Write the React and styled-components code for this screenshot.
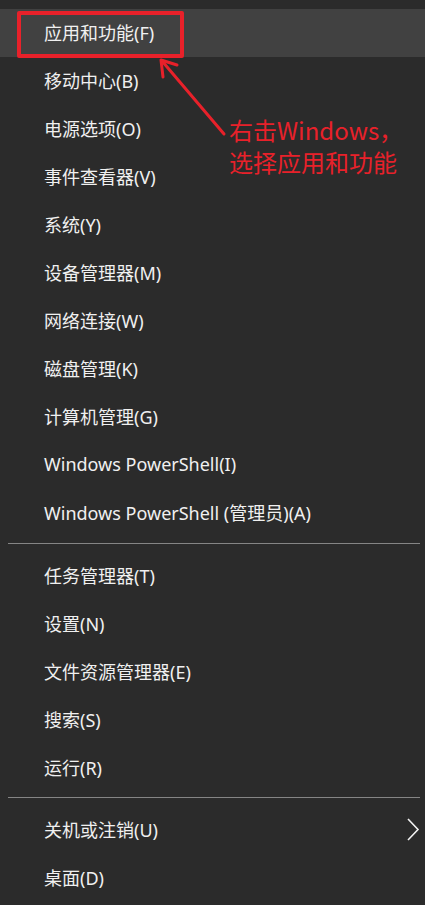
import styled, { createGlobalStyle } from "styled-components";

const GlobalStyle = createGlobalStyle`
  html, body {
    margin: 0;
    padding: 0;
    background: #2b2b2b;
  }
  body {
    font-family: "Noto Sans", "Noto Sans CJK SC", sans-serif;
  }
`;

const Page = styled.div`
  position: relative;
  width: 425px;
  height: 905px;
  background: #2b2b2b;
  overflow: hidden;
`;

const Menu = styled.div`
  display: flex;
  flex-direction: column;
  padding-top: 9px;
`;

const Item = styled.div`
  position: relative;
  display: flex;
  align-items: center;
  box-sizing: border-box;
  height: 48px;
  padding: 0 0 2px 44px;
  font-family: "Noto Sans", "Noto Sans CJK SC", sans-serif;
  font-size: 18px;
  color: #f0f0f0;
  background: ${(p) => (p.$active ? "#414141" : "transparent")};
`;

const Separator = styled.div`
  height: 1px;
  background: #858585;
  margin: ${(p) => p.$margin};
`;

const Chevron = styled.svg`
  position: absolute;
  right: 5px;
  top: 12px;
`;

const HighlightBox = styled.div`
  position: absolute;
  left: 17px;
  top: 11px;
  width: 159px;
  height: 39px;
  border: 4px solid #e8212a;
  border-radius: 2px;
`;

const Arrow = styled.svg`
  position: absolute;
  left: 150px;
  top: 50px;
`;

const Note = styled.div`
  position: absolute;
  left: 229px;
  top: 114px;
  font-family: "Noto Sans CJK SC", sans-serif;
  font-size: 24px;
  line-height: 32px;
  color: #e8212a;
`;

const groups = [
  [
    "应用和功能(F)",
    "移动中心(B)",
    "电源选项(O)",
    "事件查看器(V)",
    "系统(Y)",
    "设备管理器(M)",
    "网络连接(W)",
    "磁盘管理(K)",
    "计算机管理(G)",
    "Windows PowerShell(I)",
    "Windows PowerShell (管理员)(A)",
  ],
  ["任务管理器(T)", "设置(N)", "文件资源管理器(E)", "搜索(S)", "运行(R)"],
  ["关机或注销(U)", "桌面(D)"],
];

function App() {
  return (
    <Page>
      <GlobalStyle />
      <Menu>
        {groups[0].map((t, i) => (
          <Item key={t} $active={i === 0}>
            {t}
          </Item>
        ))}
        <Separator $margin="6px 5px 8px 8px" />
        {groups[1].map((t) => (
          <Item key={t}>{t}</Item>
        ))}
        <Separator $margin="5px 5px 8px 8px" />
        {groups[2].map((t, i) => (
          <Item key={t}>
            {t}
            {i === 0 && (
              <Chevron width="14" height="24" viewBox="0 0 14 24">
                <polyline
                  points="2,1 12,11.5 2,22"
                  fill="none"
                  stroke="#f2f2f2"
                  strokeWidth="1.6"
                />
              </Chevron>
            )}
          </Item>
        ))}
      </Menu>

      <HighlightBox />
      <Arrow width="90" height="95" viewBox="0 0 90 95">
        <line
          x1="12"
          y1="11"
          x2="74"
          y2="84"
          stroke="#e8212a"
          strokeWidth="3"
          strokeLinecap="round"
        />
        <polyline
          points="13,27 11,10 27,15"
          fill="none"
          stroke="#e8212a"
          strokeWidth="3"
          strokeLinecap="round"
          strokeLinejoin="round"
        />
      </Arrow>
      <Note>
        右击Windows，
        <br />
        选择应用和功能
      </Note>
    </Page>
  );
}

export default App;
